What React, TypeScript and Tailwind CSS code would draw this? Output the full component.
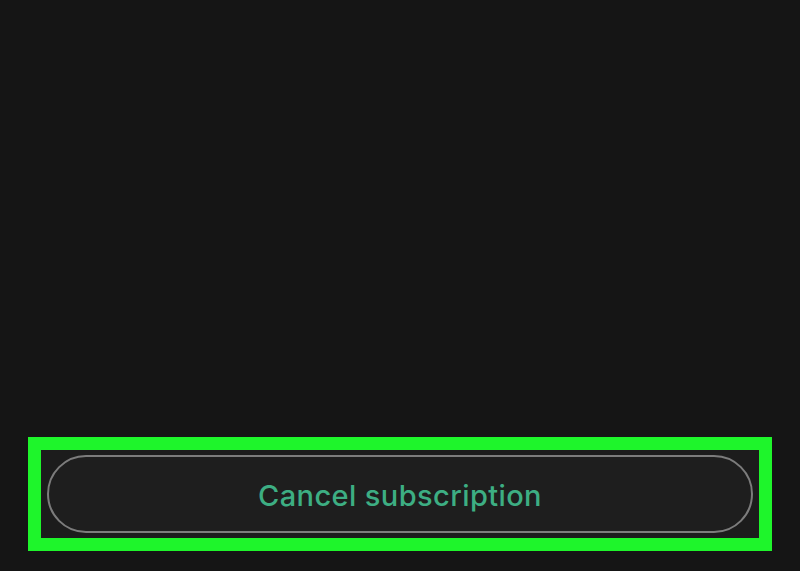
export default function App() {
  return (
    <div className="w-[800px] h-[571px] bg-[#151515] flex flex-col justify-end pb-[20px] px-[28px]" style={{ fontFamily: 'Inter, "Noto Sans", sans-serif' }}>
      <div className="border-[13px] border-[#1ef52b] bg-[#1c1c1c] h-[114px] px-[6px] py-[5px] flex">
        <button className="flex-1 rounded-full border-2 border-[#7c7c7c] bg-[#1e1e1e] flex items-center justify-center pt-[3px] text-[#3dae83] text-[29px] font-medium tracking-[0.4px]">
          Cancel subscription
        </button>
      </div>
    </div>
  );
}
